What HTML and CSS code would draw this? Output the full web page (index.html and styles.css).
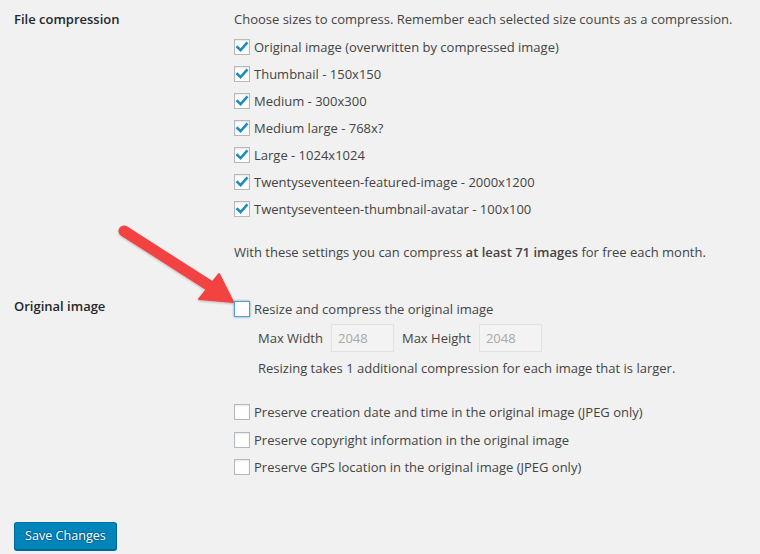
FILE: index.html
```html
<!DOCTYPE html>
<html>
<head>
<meta charset="utf-8">
<link rel="stylesheet" href="styles.css">
</head>
<body>
<div class="page">
  <div class="row first">
    <div class="label">File compression</div>
    <div class="field">
      <p class="line">Choose sizes to compress. Remember each selected size counts as a compression.</p>
      <label class="check"><span class="box checked"><svg viewBox="0 0 16 16" width="16" height="16"><path d="M3.5 8.2 L6.6 11.2 L12.6 4.4" fill="none" stroke="#1e8cbe" stroke-width="2.6" stroke-linecap="square"/></svg></span>Original image (overwritten by compressed image)</label>
      <label class="check"><span class="box checked"><svg viewBox="0 0 16 16" width="16" height="16"><path d="M3.5 8.2 L6.6 11.2 L12.6 4.4" fill="none" stroke="#1e8cbe" stroke-width="2.6" stroke-linecap="square"/></svg></span>Thumbnail - 150x150</label>
      <label class="check"><span class="box checked"><svg viewBox="0 0 16 16" width="16" height="16"><path d="M3.5 8.2 L6.6 11.2 L12.6 4.4" fill="none" stroke="#1e8cbe" stroke-width="2.6" stroke-linecap="square"/></svg></span>Medium - 300x300</label>
      <label class="check"><span class="box checked"><svg viewBox="0 0 16 16" width="16" height="16"><path d="M3.5 8.2 L6.6 11.2 L12.6 4.4" fill="none" stroke="#1e8cbe" stroke-width="2.6" stroke-linecap="square"/></svg></span>Medium large - 768x?</label>
      <label class="check"><span class="box checked"><svg viewBox="0 0 16 16" width="16" height="16"><path d="M3.5 8.2 L6.6 11.2 L12.6 4.4" fill="none" stroke="#1e8cbe" stroke-width="2.6" stroke-linecap="square"/></svg></span>Large - 1024x1024</label>
      <label class="check"><span class="box checked"><svg viewBox="0 0 16 16" width="16" height="16"><path d="M3.5 8.2 L6.6 11.2 L12.6 4.4" fill="none" stroke="#1e8cbe" stroke-width="2.6" stroke-linecap="square"/></svg></span>Twentyseventeen-featured-image - 2000x1200</label>
      <label class="check"><span class="box checked"><svg viewBox="0 0 16 16" width="16" height="16"><path d="M3.5 8.2 L6.6 11.2 L12.6 4.4" fill="none" stroke="#1e8cbe" stroke-width="2.6" stroke-linecap="square"/></svg></span>Twentyseventeen-thumbnail-avatar - 100x100</label>
      <p class="line note">With these settings you can compress <strong>at least 71 images</strong> for free each month.</p>
    </div>
  </div>

  <div class="row second">
    <div class="label label2">Original image</div>
    <div class="field">
      <label class="check"><span class="box focus"></span>Resize and compress the original image</label>
      <div class="sizes">
        <span>Max Width</span><span class="input">2048</span>
        <span>Max Height</span><span class="input">2048</span>
      </div>
      <p class="line indent">Resizing takes 1 additional compression for each image that is larger.</p>
      <div class="preserve">
        <label class="check"><span class="box"></span>Preserve creation date and time in the original image (JPEG only)</label>
        <label class="check"><span class="box"></span>Preserve copyright information in the original image</label>
        <label class="check"><span class="box"></span>Preserve GPS location in the original image (JPEG only)</label>
      </div>
    </div>
  </div>

  <div class="actions">
    <button class="button">Save Changes</button>
  </div>

  <svg class="arrow" width="140" height="100" viewBox="110 220 140 100">
    <defs>
      <filter id="sh" x="-20%" y="-20%" width="140%" height="140%">
        <feDropShadow dx="0" dy="1" stdDeviation="1" flood-color="#000" flood-opacity="0.25"/>
      </filter>
    </defs>
    <g filter="url(#sh)" fill="#f24343" stroke="#f24343">
      <line x1="124" y1="231" x2="210" y2="286" stroke-width="11" stroke-linecap="round"/>
      <polygon points="233,302 199,299 219,274" stroke-width="2" stroke-linejoin="round"/>
    </g>
  </svg>
</div>
</body>
</html>
```

FILE: styles.css
```css
html, body {
  margin: 0;
  padding: 0;
  background: #f1f1f1;
}

.page {
  position: relative;
  width: 760px;
  height: 554px;
  padding: 6px 14px 0 14px;
  box-sizing: border-box;
  font-family: "Segoe UI", "Open Sans", "Noto Sans", sans-serif;
  font-size: 13px;
  color: #444;
}

.row {
  display: grid;
  grid-template-columns: 220px 1fr;
}

.label {
  font-weight: 600;
  color: #23282d;
  line-height: 27px;
}

.label2 {
  margin-top: -3px;
}

.field {
  display: flex;
  flex-direction: column;
}

.line {
  margin: 0;
  line-height: 27px;
}

.note {
  margin-top: 16.5px;
}

.note strong {
  font-weight: 600;
}

.check {
  display: flex;
  align-items: center;
  height: 27px;
  white-space: nowrap;
}

.box {
  width: 16px;
  height: 16px;
  box-sizing: border-box;
  border: 1px solid #b4b9be;
  background: #fff;
  box-shadow: inset 0 1px 2px rgba(0,0,0,0.1);
  margin-right: 4px;
  display: flex;
  align-items: center;
  justify-content: center;
  flex: none;
}

.box svg {
  display: block;
  margin: -1px;
}

.box.focus {
  border-color: #5b9dd9;
  box-shadow: 0 0 2px rgba(30,140,190,0.8);
}

.second {
  margin-top: 30px;
}

.sizes {
  display: flex;
  align-items: center;
  gap: 8px;
  margin-top: 1.5px;
  padding-left: 24px;
  height: 28px;
}

.input {
  width: 63px;
  height: 28px;
  box-sizing: border-box;
  border: 1px solid #e2e2e2;
  background: #f3f3f3;
  color: #a9a9a9;
  padding-left: 6px;
  line-height: 26px;
}

.indent {
  padding-left: 24px;
  margin-top: 2.5px;
}

.preserve {
  margin-top: 17px;
  display: flex;
  flex-direction: column;
}

.preserve .check {
  height: 27.5px;
}

.actions {
  margin-top: 41px;
}

.button {
  height: 28px;
  padding: 0 10px;
  font-family: inherit;
  font-size: 12.6px;
  color: #fff;
  background: #0085ba;
  border: 1px solid #0073aa;
  border-color: #0073aa #006799 #006799;
  border-radius: 3px;
  box-shadow: 0 1px 0 #006799;
  text-shadow: 0 -1px 1px #006799, 1px 0 1px #006799, 0 1px 1px #006799, -1px 0 1px #006799;
  line-height: 26px;
}

.arrow {
  position: absolute;
  left: 110px;
  top: 220px;
  overflow: visible;
}
```
